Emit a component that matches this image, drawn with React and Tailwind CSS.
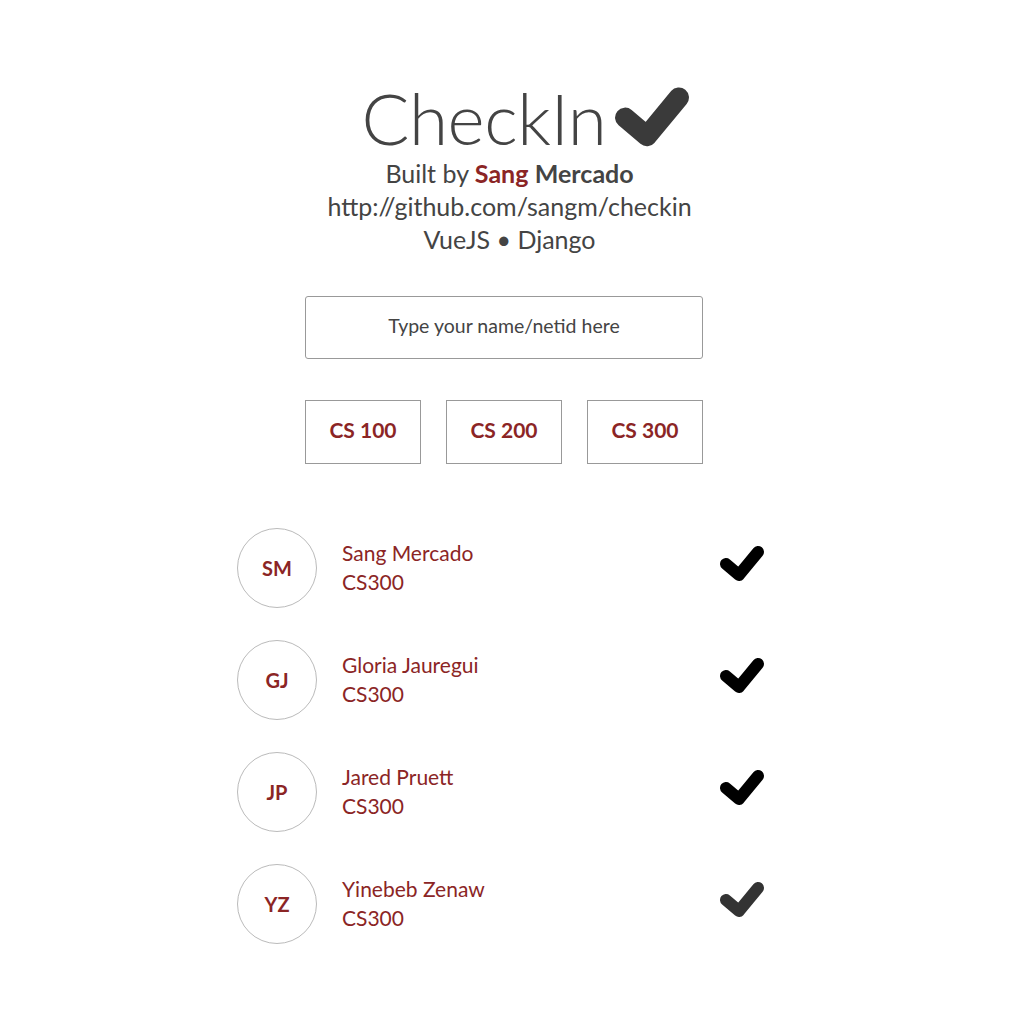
const people = [
  { initials: 'SM', name: 'Sang Mercado', course: 'CS300', color: '#000000' },
  { initials: 'GJ', name: 'Gloria Jauregui', course: 'CS300', color: '#000000' },
  { initials: 'JP', name: 'Jared Pruett', course: 'CS300', color: '#000000' },
  { initials: 'YZ', name: 'Yinebeb Zenaw', course: 'CS300', color: '#333333' }
];

const courses = ['CS 100', 'CS 200', 'CS 300'];

const Check = ({ className, color }) => (
  <svg viewBox="0 0 50 40" className={className}>
    <polyline
      points="9,21 22,32 41,9"
      fill="none"
      stroke={color}
      strokeWidth="12"
      strokeLinecap="round"
      strokeLinejoin="round"
    />
  </svg>
);

const App = () => {
  return (
    <div className="min-h-screen bg-white text-[#444] font-['Lato','Noto_Sans',sans-serif]">
      <div className="pt-[82px] flex flex-col items-center">
        <div className="pr-[16px] flex flex-col items-center">
          <div className="flex items-center ml-[48px]">
            <h1 className="text-[71px] leading-none font-light tracking-[-0.5px]">CheckIn</h1>
            <Check className="w-[84px] h-[68px] ml-[4px] mt-[-4px]" color="#3a3a3a" />
          </div>

          <div className="mt-[4px] ml-[11px] text-center text-[25px] leading-[33px]">
            <p>
              Built by <span className="font-bold text-[#8b2525]">Sang</span>{' '}
              <span className="font-bold">Mercado</span>
            </p>
            <p>http://github.com/sangm/checkin</p>
            <p>VueJS • Django</p>
          </div>

          <input
            type="text"
            placeholder="Type your name/netid here"
            className="mt-[40px] w-[398px] h-[63px] border border-[#999] rounded-[3px] text-center text-[19.5px] pb-[4px] placeholder:text-[#444] outline-none"
          />

          <div className="mt-[41px] flex gap-[25px]">
            {courses.map(c => (
              <button
                key={c}
                className="w-[116px] h-[64px] border border-[#999] text-[21px] font-bold text-[#8b2525] pb-[4px]"
              >
                {c}
              </button>
            ))}
          </div>
        </div>

        <div className="mt-[64px] w-[550px] flex flex-col gap-[32px] pb-[60px]">
          {people.map(p => (
            <div key={p.initials} className="flex items-center">
              <div className="w-[80px] h-[80px] rounded-full border border-[#bbb] flex items-center justify-center text-[20px] font-bold text-[#8b2525]">
                {p.initials}
              </div>
              <div className="ml-[25px] flex-1 text-[21px] leading-[29px] text-[#8b2525] mt-[-2px]">
                <p>{p.name}</p>
                <p>{p.course}</p>
              </div>
              <Check className="w-[50px] h-[40px] mr-[20px] mt-[-10px]" color={p.color} />
            </div>
          ))}
        </div>
      </div>
    </div>
  );
};

export default App;
